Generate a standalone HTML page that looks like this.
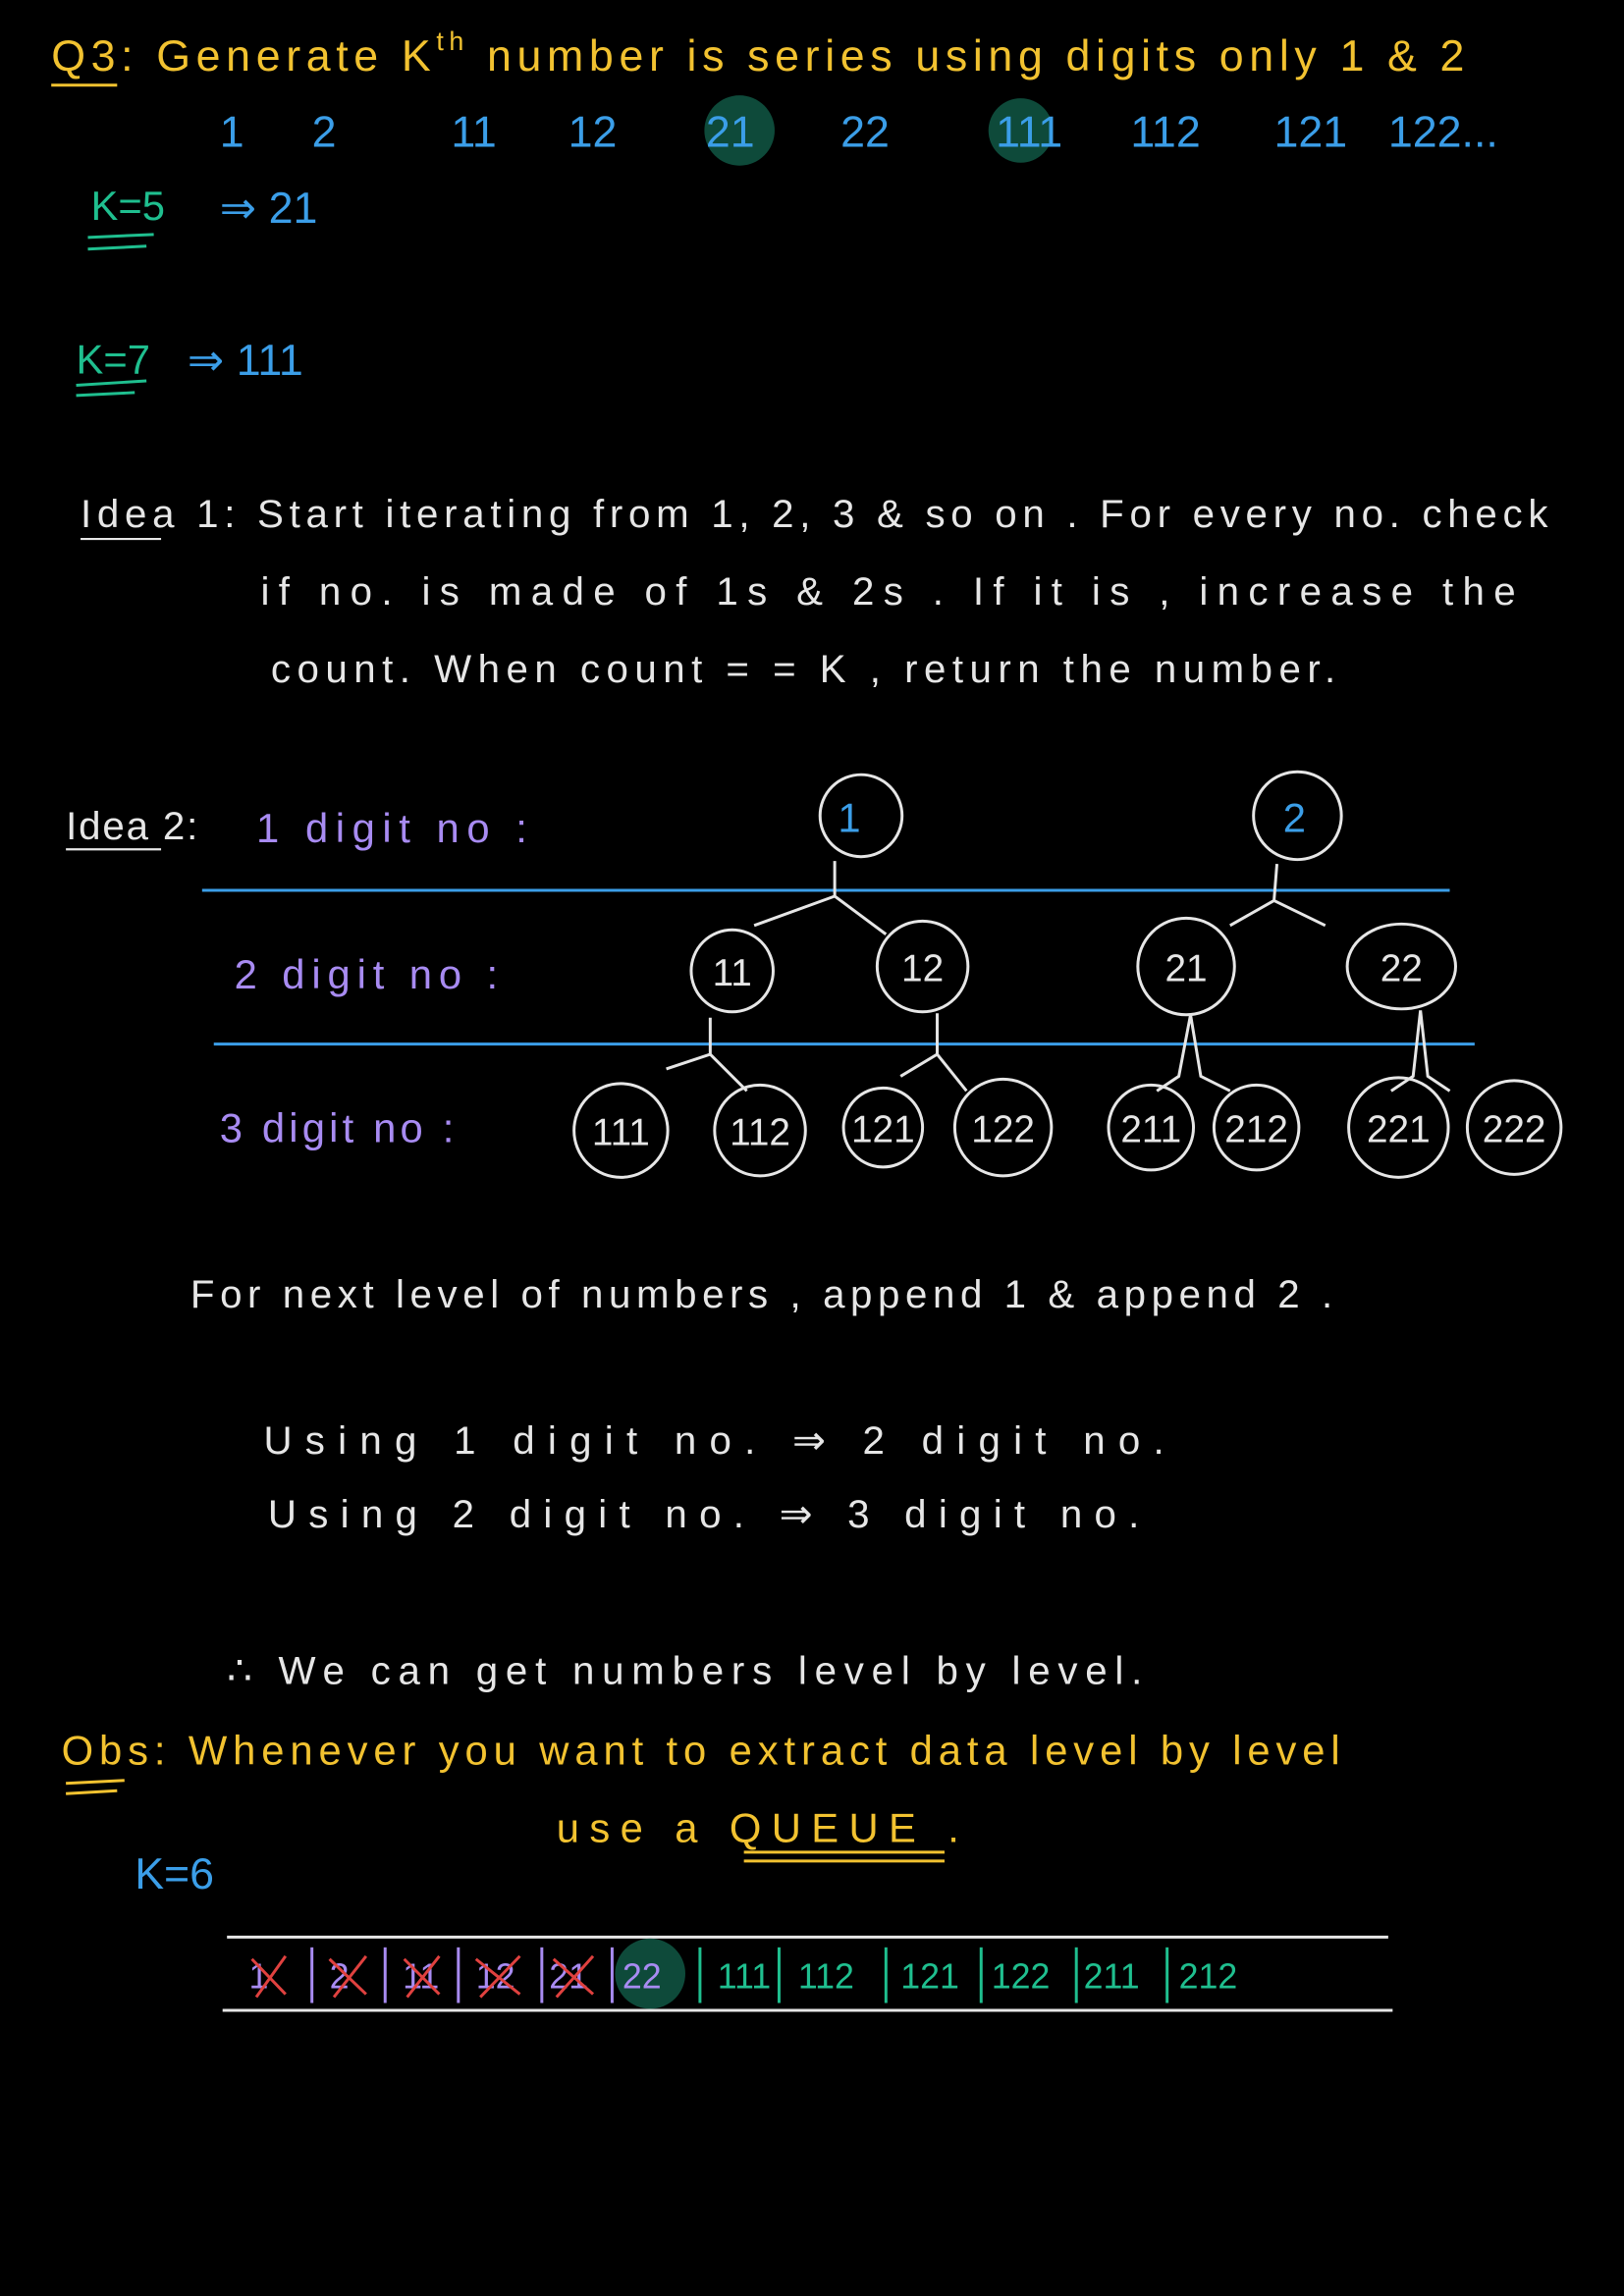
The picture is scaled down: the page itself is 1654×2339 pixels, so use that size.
<!DOCTYPE html>
<html><head><meta charset="utf-8"><style>
html,body{margin:0;padding:0;background:#000;}
svg{display:block;}
text{font-family:"Liberation Sans",sans-serif;}
</style></head><body>
<svg width="1654" height="2339" viewBox="0 0 1109 1568" xmlns="http://www.w3.org/2000/svg">
<rect width="1109" height="1568" fill="#000"/>
<g font-size="30" fill="#f2c230">
<text x="35" y="48" textLength="965" lengthAdjust="spacing">Q3: Generate  K<tspan font-size="18" dy="-14">th</tspan><tspan dy="14"> number is series  using  digits  only  1 &amp; 2</tspan></text>
</g>
<line x1="35" y1="58" x2="80" y2="58" stroke="#f2c230" stroke-width="2"/>
<circle cx="505" cy="89" r="24" fill="#0e4a3a"/>
<circle cx="697" cy="89" r="22" fill="#0e4a3a"/>
<g font-size="30" fill="#3b9ee8">
<text x="150" y="100">1</text><text x="213" y="100">2</text><text x="308" y="100">11</text>
<text x="388" y="100">12</text><text x="482" y="100">21</text><text x="574" y="100">22</text>
<text x="680" y="100">111</text><text x="772" y="100">112</text><text x="870" y="100">121</text>
<text x="948" y="100">122...</text>
<text x="150" y="152">⇒ 21</text>
<text x="128" y="256">⇒ 111</text>
</g>
<g fill="#1fbf8f" font-size="28"><text x="62" y="150">K=5</text><text x="52" y="255">K=7</text></g>
<g stroke="#1fbf8f" stroke-width="2"><line x1="60" y1="162" x2="105" y2="160"/><line x1="60" y1="170" x2="100" y2="168"/>
<line x1="52" y1="263" x2="100" y2="260"/><line x1="52" y1="270" x2="92" y2="268"/></g>
<g fill="#e6e6e6" font-size="27">
<text x="55" y="360" textLength="1002" lengthAdjust="spacing">Idea 1:  Start  iterating  from 1, 2, 3 &amp; so on .  For  every   no.  check</text>
<text x="178" y="413" textLength="857" lengthAdjust="spacing">if  no.  is  made  of  1s &amp; 2s .  If  it  is ,    increase  the</text>
<text x="185" y="466" textLength="727" lengthAdjust="spacing">count.  When   count  = = K ,  return  the  number.</text>
<text x="45" y="573" textLength="90" lengthAdjust="spacing">Idea 2:</text>
<text x="130" y="893" textLength="780" lengthAdjust="spacing">For  next  level  of  numbers , append 1  &amp; append 2 .</text>
<text x="180" y="993" textLength="615" lengthAdjust="spacing">Using    1 digit  no.    ⇒   2 digit  no.</text>
<text x="183" y="1043" textLength="595" lengthAdjust="spacing">Using   2 digit    no.    ⇒    3 digit  no.</text>
<text x="155" y="1150" textLength="625" lengthAdjust="spacing">∴  We   can  get  numbers  level  by  level.</text>
</g>
<line x1="55" y1="368" x2="110" y2="368" stroke="#e6e6e6" stroke-width="1.5"/>
<line x1="45" y1="580" x2="110" y2="580" stroke="#e6e6e6" stroke-width="1.5"/>
<g fill="#a88bf2" font-size="28">
<text x="175" y="575" textLength="185" lengthAdjust="spacing">1 digit  no :</text>
<text x="160" y="675" textLength="180" lengthAdjust="spacing">2 digit  no :</text>
<text x="150" y="780" textLength="160" lengthAdjust="spacing">3 digit  no :</text>
</g>
<g stroke="#3b9ee8" stroke-width="2"><line x1="138" y1="608" x2="990" y2="608"/><line x1="146" y1="713" x2="1007" y2="713"/></g>
<g fill="none" stroke="#e6e6e6" stroke-width="2">
<circle cx="588" cy="557" r="28"/><circle cx="886" cy="557" r="30"/>
<circle cx="500" cy="663" r="28"/><circle cx="630" cy="660" r="31"/><circle cx="810" cy="660" r="33"/><ellipse cx="957" cy="660" rx="37" ry="29"/>
<circle cx="424" cy="772" r="32"/><circle cx="519" cy="772" r="31"/><circle cx="603" cy="770" r="27"/><circle cx="685" cy="770" r="33"/>
<circle cx="786" cy="770" r="29"/><circle cx="858" cy="770" r="29"/><circle cx="955" cy="770" r="34"/><circle cx="1034" cy="770" r="32"/>
<path d="M570 588 L570 612 L515 632 M570 612 L605 638 M872 590 L870 615 L840 632 M870 615 L905 632"/>
<path d="M485 695 L485 720 L455 730 M485 720 L510 745 M640 692 L640 720 L615 735 M640 720 L660 745 M813 693 L805 735 L790 745 M813 693 L820 735 L840 745 M970 690 L965 735 L950 745 M970 690 L975 735 L990 745"/>
</g>
<g font-size="28" fill="#3b9ee8" text-anchor="middle">
<text x="580" y="568">1</text><text x="884" y="568">2</text>
</g>
<g font-size="26" fill="#e6e6e6" text-anchor="middle">
<text x="500" y="673">11</text><text x="630" y="670">12</text><text x="810" y="670">21</text><text x="957" y="670">22</text>
<text x="424" y="782">111</text><text x="519" y="782">112</text><text x="603" y="780">121</text><text x="685" y="780">122</text>
<text x="786" y="780">211</text><text x="858" y="780">212</text><text x="955" y="780">221</text><text x="1034" y="780">222</text>
</g>
<g fill="#f2c230" font-size="28">
<text x="42" y="1205" textLength="873" lengthAdjust="spacing">Obs: Whenever  you  want  to extract  data  level  by  level</text>
<text x="380" y="1258" textLength="275" lengthAdjust="spacing">use  a   QUEUE .</text>
</g>
<g stroke="#f2c230" stroke-width="2"><line x1="45" y1="1218" x2="85" y2="1216"/><line x1="45" y1="1225" x2="80" y2="1223"/>
<line x1="508" y1="1265" x2="645" y2="1265"/><line x1="508" y1="1271" x2="645" y2="1271"/></g>
<text x="92" y="1290" font-size="30" fill="#3b9ee8">K=6</text>
<g stroke="#e6e6e6" stroke-width="2"><line x1="155" y1="1323" x2="948" y2="1323"/><line x1="152" y1="1373" x2="951" y2="1373"/></g>
<circle cx="444" cy="1348" r="24" fill="#0e4a3a"/>
<g font-size="24" fill="#a88bf2"><text x="170" y="1358">1</text><text x="225" y="1358">2</text><text x="275" y="1358">11</text><text x="325" y="1358">12</text><text x="375" y="1358">21</text><text x="425" y="1358">22</text></g>
<g stroke="#a88bf2" stroke-width="2"><line x1="213" y1="1330" x2="213" y2="1368"/><line x1="263" y1="1330" x2="263" y2="1368"/><line x1="313" y1="1330" x2="313" y2="1368"/><line x1="370" y1="1330" x2="370" y2="1368"/><line x1="418" y1="1330" x2="418" y2="1368"/></g>
<g stroke="#e0413f" stroke-width="2"><path d="M172 1338 L195 1362 M195 1336 L175 1364 M225 1338 L250 1362 M250 1336 L228 1364 M276 1338 L300 1362 M300 1336 L278 1364 M325 1338 L355 1362 M355 1336 L328 1364 M378 1338 L405 1362 M405 1336 L380 1364"/></g>
<g font-size="24" fill="#1fbf8f"><text x="490" y="1358">111</text><text x="545" y="1358">112</text><text x="615" y="1358">121</text><text x="677" y="1358">122</text><text x="740" y="1358">211</text><text x="805" y="1358">212</text></g>
<g stroke="#1fbf8f" stroke-width="2"><line x1="478" y1="1330" x2="478" y2="1368"/><line x1="532" y1="1330" x2="532" y2="1368"/><line x1="605" y1="1330" x2="605" y2="1368"/><line x1="670" y1="1330" x2="670" y2="1368"/><line x1="735" y1="1330" x2="735" y2="1368"/><line x1="797" y1="1330" x2="797" y2="1368"/></g>
</svg>
</body></html>
